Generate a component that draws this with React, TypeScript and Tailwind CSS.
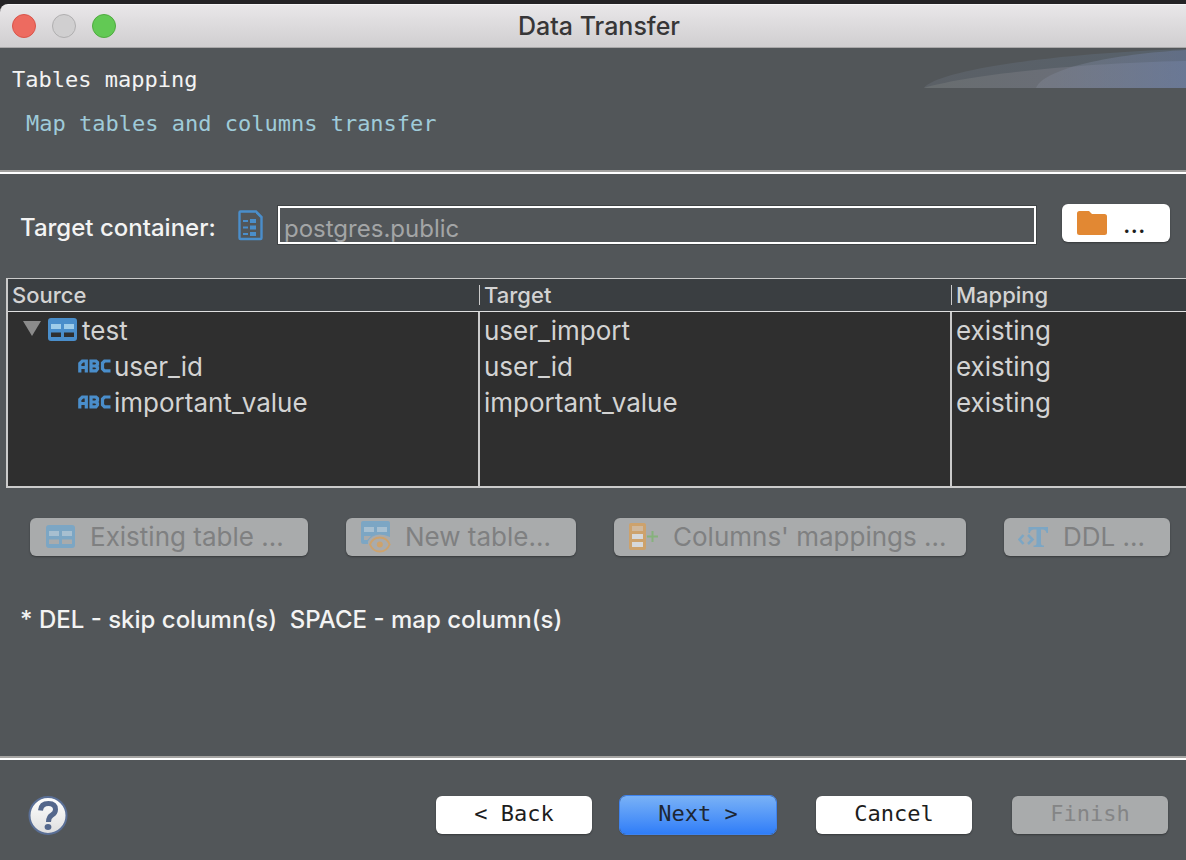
import type { ReactNode } from "react";

const sans = "font-['Inter','Liberation_Sans',sans-serif]";
const mono = "font-['DejaVu_Sans_Mono','Liberation_Mono',monospace]";

function TableIcon({ muted = false }: { muted?: boolean }) {
  const frame = muted ? "#7ca6c4" : "#4a8ecb";
  const cell = muted ? "#a7bfd0" : "#9fcdea";
  const hole = muted ? "#a9abac" : "#2f2f2f";
  return (
    <svg width="30" height="24" viewBox="0 0 30 24" aria-hidden="true" className="shrink-0">
      <rect x="0" y="0" width="29" height="23" rx="3" fill={frame} />
      <path d="M3 6h10v5H3zM16 6h10v5H16z" fill={cell} />
      <path d="M3 14.500h10v4.500H3zM16 14.500h10v4.500H16z" fill={hole} />
    </svg>
  );
}

function NewTableIcon() {
  return (
    <svg width="30" height="32" viewBox="0 0 30 32" aria-hidden="true" className="shrink-0">
      <path d="M2 0h25a2 2 0 0 1 2 2v14Q24 13.500 18.500 13.500Q10.500 14 7 20.500V23H2.500A2.500 2.500 0 0 1 0 20.500V2A2 2 0 0 1 2 0z" fill="#7ca6c4" />
      <path d="M3 6h10v5H3zM16 6h10v5H16z" fill="#a7bfd0" />
      <path d="M3 15h7L6.500 19H3z" fill="#a9abac" />
      <path d="M9 23.500C11 18.500 15 16.500 18.800 16.500S26.600 18.500 28.600 23.500C26.600 28.500 22.600 30.500 18.800 30.500S11 28.500 9 23.500z" fill="#a9abac" stroke="#cda26c" strokeWidth="2" />
      <circle cx="18.800" cy="23.500" r="3" fill="#cda26c" />
    </svg>
  );
}

function ColumnsIcon() {
  return (
    <svg width="30" height="28" viewBox="0 0 30 28" aria-hidden="true" className="shrink-0">
      <rect x="0" y="0" width="17" height="27" rx="2" fill="#cda26c" />
      <rect x="3" y="3" width="11" height="5" fill="#cfb89d" />
      <path d="M3 11h11v5H3zM3 19h11v5H3z" fill="#d6d8da" />
      <path d="M18 13.500h11M23.500 8v11" stroke="#86b27c" strokeWidth="2" fill="none" />
    </svg>
  );
}

function DdlIcon() {
  return (
    <svg width="31" height="22" viewBox="0 0 31 22" aria-hidden="true" className="shrink-0">
      <path d="M5.500 9L1.500 13.500L5.500 18M10 9L14.500 13.500L10 18" stroke="#7ca6c4" strokeWidth="2.600" fill="none" />
      <path d="M10.500 1H30V7H28.500Q28 3.500 24.500 3.500H23V17.500Q23 19.500 26 19.500V21H15.500V19.500Q18.500 19.500 18.500 17.500V3.500H16Q12.500 3.500 12 7H10.500z" fill="#7ca6c4" />
    </svg>
  );
}

function AbcIcon() {
  return (
    <svg width="33" height="14" viewBox="0 0 33 14" aria-hidden="true" className="shrink-0">
      <g fill="none" stroke="#4a8ecb" strokeWidth="3.200">
        <path d="M1.800 13.500V4.500L4.300 2H8.300V13.500M1.800 8.500H8.300" />
        <path d="M13 .5V12.500M11.500 2H18L19.500 3.500V5.500L18 7H13M18 7L19.500 8.500V10L18 11.800H11.500" />
        <path d="M32.500 2H26.500L24.500 4V9.800L26.500 11.800H32.500" />
      </g>
    </svg>
  );
}

function ContainerIcon() {
  return (
    <svg width="26" height="31" viewBox="0 0 26 31" aria-hidden="true" className="mb-[3px] shrink-0">
      <path d="M2.500 1.500H18L23.500 7V28Q23.500 29 22.500 29H2.500Q1.500 29 1.500 28V2.500Q1.500 1.500 2.500 1.500z" fill="none" stroke="#4a8ecb" strokeWidth="2.400" />
      <path d="M18 1L24.500 7.500H22L18 3.500z" fill="#4a8ecb" />
      <path d="M12 9h6v4h-6zM12 15.500h6v4h-6zM12 22h6v4h-6z" fill="#4a8ecb" />
      <path d="M5 11h5M5 17.500h5M5 24h5" stroke="#4a8ecb" strokeWidth="1.800" />
    </svg>
  );
}

function FolderIcon() {
  return (
    <svg width="30" height="24" viewBox="0 0 30 24" aria-hidden="true" className="shrink-0">
      <path d="M2.500 0H12L15 3H27.500Q30 3 30 5.500V21.500Q30 24 27.500 24H2.500Q0 24 0 21.500V2.500Q0 0 2.500 0z" fill="#e28833" />
    </svg>
  );
}

function Swoosh() {
  return (
    <svg width="262" height="40" viewBox="0 0 262 40" aria-hidden="true" className="shrink-0">
      <defs>
        <linearGradient id="far" x1="0" x2="1">
          <stop offset="0" stopColor="#5b6066" />
          <stop offset="1" stopColor="#57616b" />
        </linearGradient>
        <linearGradient id="near" x1="0" x2="1">
          <stop offset="0" stopColor="#686d6f" />
          <stop offset="0.500" stopColor="#6a6e77" />
          <stop offset="1" stopColor="#69758a" />
        </linearGradient>
        <linearGradient id="glow" x1="0" x2="1">
          <stop offset="0" stopColor="#858b99" stopOpacity="0.350" />
          <stop offset="1" stopColor="#6b7ba0" stopOpacity="0.500" />
        </linearGradient>
      </defs>
      <path d="M0 40C10 25 110 6 262 1V40z" fill="url(#far)" />
      <path d="M0 40C40 28 150 15 262 13V40z" fill="url(#near)" />
      <path d="M112 40C120 20 190 6 262 2V40z" fill="url(#glow)" />
    </svg>
  );
}

function ActionButton({ icon, children, className }: { icon: ReactNode; children: ReactNode; className: string }) {
  return (
    <button
      disabled
      className={`flex h-[38px] items-center gap-[14px] rounded-md bg-[#a9abac] text-[26px] leading-8 text-[#7f8081] shadow-[0_1px_2px_rgba(0,0,0,0.35)] ${className}`}
    >
      {icon}
      <span className="whitespace-nowrap">{children}</span>
    </button>
  );
}

const rows = [
  { source: "test", target: "user_import", mapping: "existing", parent: true },
  { source: "user_id", target: "user_id", mapping: "existing", parent: false },
  { source: "important_value", target: "important_value", mapping: "existing", parent: false },
];

const headings = ["Source", "Target", "Mapping"];

const footerButton = "h-[38px] w-[156px] rounded-md pb-[2px] text-[22px] leading-7 shadow-[0_1px_2px_rgba(0,0,0,0.35)]";

export default function App() {
  return (
    <div className={`flex min-h-screen flex-col overflow-hidden bg-[#242325] ${sans}`}>
      <header className="mt-1 grid h-11 grid-cols-[1fr_auto_1fr] items-center rounded-tl-lg border-t border-b border-t-[#f6f5f6] border-b-[#a9a8a9] bg-linear-to-b from-[#e9e7e9] to-[#d0ced0] pl-3">
        <div className="flex gap-4">
          <button aria-label="Close" className="size-6 rounded-full border border-[#d9544a] bg-[#ed6b60]" />
          <button aria-label="Minimize" className="size-6 rounded-full border border-[#b0afb0] bg-[#d0cfd0]" />
          <button aria-label="Zoom" className="size-6 rounded-full border border-[#4fab3f] bg-[#62c954]" />
        </div>
        <h1 className="text-[25px] leading-8 font-[450] text-[#373637]">Data Transfer</h1>
      </header>

      <main className="flex flex-1 flex-col bg-[#525659]">
        <section className="flex justify-between border-b-2 border-[#a09f9d]">
          <div className={`flex grow flex-col gap-4 pt-[18px] pb-8 pl-3 text-[22px] leading-7 ${mono}`}>
            <h2 className="text-[#f3f3f3]">Tables mapping</h2>
            <p className="pl-[14px] text-[#9fcbd9]">Map tables and columns transfer</p>
          </div>
          <Swoosh />
        </section>

        <section className="flex grow flex-col border-t-2 border-white">
          <div className="mt-[30px] flex items-end pr-4 pl-5">
            <label htmlFor="container" className="w-[218px] shrink-0 text-2xl leading-8 font-[450] text-[#f3f3f3]">
              Target container:
            </label>
            <ContainerIcon />
            <input
              id="container"
              readOnly
              defaultValue="postgres.public"
              className="ml-[14px] h-[38px] min-w-0 grow border-2 border-white bg-transparent px-1 pt-[6px] text-2xl text-[#a3a5a6] outline outline-[#3f4345]"
            />
            <button
              aria-label="Choose container"
              className="mb-[2px] ml-[26px] flex h-[38px] w-[108px] shrink-0 items-center gap-4 rounded-md bg-white pl-[15px] text-[26px] text-[#1d1d1d] shadow-[0_1px_2px_rgba(0,0,0,0.35)]"
            >
              <FolderIcon />
              <span>...</span>
            </button>
          </div>

          <div className="mt-[34px] ml-[6px] h-[210px] border-t border-b-2 border-l-2 border-[#cbcbcb] bg-[#2f2f2f]">
            <table className="h-full w-full table-fixed border-separate border-spacing-0 text-left text-[#d3d3d3]">
              <colgroup>
                <col className="w-[472px]" />
                <col className="w-[472px]" />
                <col />
              </colgroup>
              <thead>
                <tr>
                  {headings.map((heading) => (
                    <th key={heading} scope="col" className="group h-[33px] border-b border-[#e0e0e0] bg-[#3a3e41] p-0 text-[22px] leading-5 font-[450]">
                      <div className="flex h-5 items-center border-r border-[#cbcbcb] pl-1 group-last:border-r-0">{heading}</div>
                    </th>
                  ))}
                </tr>
              </thead>
              <tbody className="text-[26px] leading-9">
                {rows.map((row) => (
                  <tr key={row.source} className="h-9">
                    <td className="border-r-2 border-[#cbcbcb] p-0">
                      {row.parent ? (
                        <div className="flex h-9 items-center pl-[15px]">
                          <svg width="18" height="19" viewBox="0 0 18 19" aria-hidden="true" className="mr-[7px] shrink-0">
                            <path d="M0 0H18L9 15z" fill="#8b8b8b" />
                          </svg>
                          <TableIcon />
                          <span className="pt-[2px] pl-1">{row.source}</span>
                        </div>
                      ) : (
                        <div className="flex h-9 items-center gap-[3px] pl-[70px]">
                          <AbcIcon />
                          <span className="pt-[2px]">{row.source}</span>
                        </div>
                      )}
                    </td>
                    <td className="border-r-2 border-[#cbcbcb] p-0 pl-1">
                      <div className="h-9 pt-px">{row.target}</div>
                    </td>
                    <td className="p-0 pl-1">
                      <div className="h-9 pt-px">{row.mapping}</div>
                    </td>
                  </tr>
                ))}
                <tr aria-hidden="true">
                  <td className="border-r-2 border-[#cbcbcb] p-0" />
                  <td className="border-r-2 border-[#cbcbcb] p-0" />
                  <td className="p-0" />
                </tr>
              </tbody>
            </table>
          </div>

          <div className="mt-[30px] flex justify-between pr-4 pl-[30px]">
            <ActionButton className="w-[278px] pl-4" icon={<TableIcon muted />}>Existing table ...</ActionButton>
            <ActionButton className="w-[230px] pl-[15px]" icon={<NewTableIcon />}>New table...</ActionButton>
            <ActionButton className="w-[352px] pl-[15px]" icon={<ColumnsIcon />}>Columns' mappings ...</ActionButton>
            <ActionButton className="w-[166px] pl-[14px]" icon={<DdlIcon />}>DDL ...</ActionButton>
          </div>

          <p className="mt-12 pl-5 text-2xl leading-8 font-[450] whitespace-pre text-[#f3f3f3]">* DEL - skip column(s)  SPACE - map column(s)</p>
        </section>
      </main>

      <footer className="border-t-2 border-[#a5a4a2] bg-[#525659]">
        <div className={`flex items-center border-t-2 border-white pt-[35px] pr-[18px] pb-[25px] pl-7 ${mono}`}>
          <button aria-label="Help" className="mr-auto size-10 rounded-full">
            <svg width="40" height="40" viewBox="0 0 40 40" aria-hidden="true">
              <defs>
                <linearGradient id="help" x1="0" x2="0" y1="0" y2="1">
                  <stop offset="0" stopColor="#ffffff" />
                  <stop offset="1" stopColor="#dedede" />
                </linearGradient>
              </defs>
              <circle cx="20" cy="20.500" r="18.500" fill="url(#help)" stroke="#5a6f96" strokeWidth="2" />
              <path d="M12.500 15.500Q13 8.500 20.500 8.500Q27.500 8.500 27.500 14.500Q27.500 18 24 20Q20.500 22 20.500 27" fill="none" stroke="#54678c" strokeWidth="5" />
              <ellipse cx="20" cy="32" rx="3.400" ry="3" fill="#54678c" />
            </svg>
          </button>
          <div className="flex gap-7">
            <button className={`${footerButton} bg-white text-[#1d1d1d]`}>&lt; Back</button>
            <button className={`${footerButton} bg-linear-to-b from-[#79b1f6] to-[#2f7df8] text-[#1d2633] outline outline-[#3f83ee]`}>Next &gt;</button>
          </div>
          <button className={`${footerButton} ml-10 bg-white text-[#1d1d1d]`}>Cancel</button>
          <button disabled className={`${footerButton} ml-10 bg-[#a9abac] text-[#848586]`}>Finish</button>
        </div>
      </footer>
    </div>
  );
}
